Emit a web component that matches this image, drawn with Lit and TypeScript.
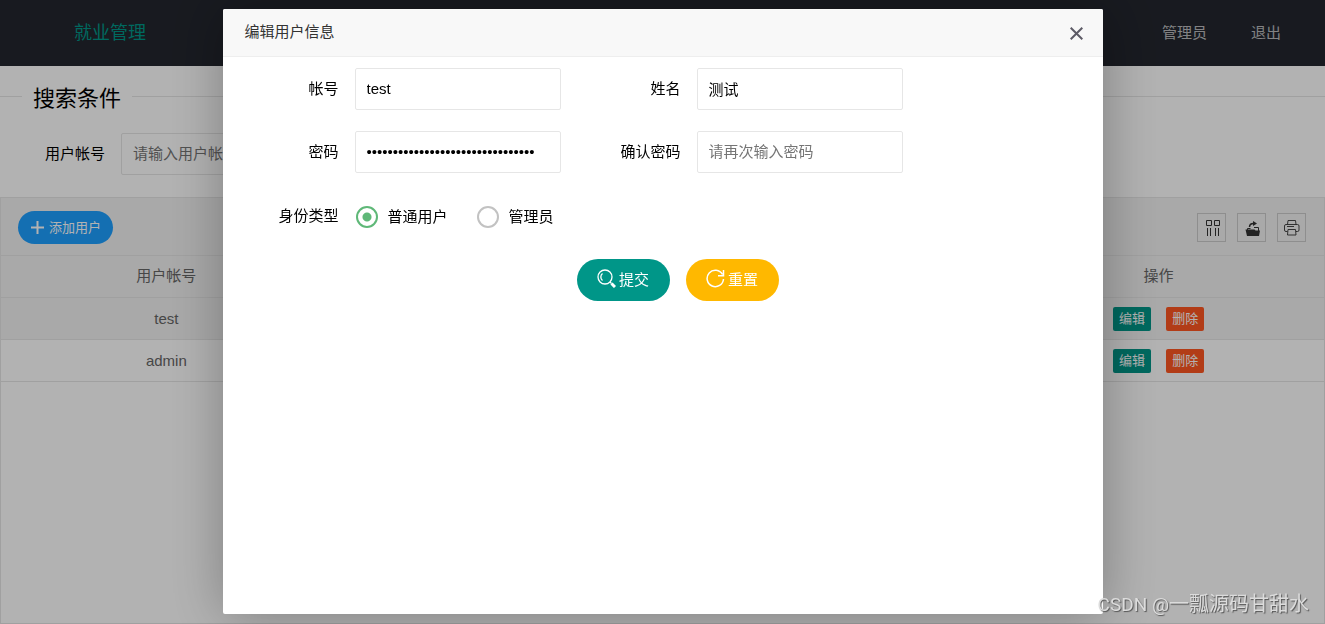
import { LitElement, html, css } from "lit";
import { customElement, state } from "lit/decorators.js";

@customElement("app-root")
export class AppRoot extends LitElement {
  @state() private role = "user";

  private users = ["test", "admin"];

  static styles = css`
    :host {
      display: flex;
      flex-direction: column;
      min-height: 100vh;
      background: #fff;
      color: #000;
      font: 15px/24px "Liberation Sans", "Noto Sans CJK SC", sans-serif;
    }
    * { box-sizing: border-box; }
    button, input { font: inherit; color: inherit; margin: 0; }
    button { border: 0; cursor: pointer; padding: 0; }
    a { color: inherit; text-decoration: none; }
    svg { display: block; flex: none; }

    .header {
      display: flex;
      align-items: center;
      justify-content: space-between;
      height: 66px;
      background: #23262e;
    }
    .logo { width: 220px; text-align: center; font-size: 18px; color: #009688; }
    .nav { display: flex; padding-right: 22px; color: rgba(255, 255, 255, 0.7); }
    .nav a { padding: 0 22px; }

    .search {
      margin: 12px 0 0;
      padding: 18px 0 22px;
      border: 0;
      border-top: 1px solid #e6e6e6;
      min-width: 0;
    }
    .search legend { margin-left: 22px; padding: 4px 11px 0; font-size: 22px; line-height: 33px; }
    .search form { display: flex; }

    .label { width: 121px; padding: 9px 16px 9px 0; text-align: right; }
    .input {
      width: 206px;
      height: 42px;
      padding: 0 11px 2px;
      border: 1px solid #e6e6e6;
      border-radius: 2px;
      background: #fff;
      outline: 0;
    }
    .input::placeholder { color: #757575; opacity: 1; }

    .table-view {
      flex: 1;
      border: 1px solid #e6e6e6;
    }
    .toolbar {
      display: flex;
      align-items: center;
      justify-content: space-between;
      height: 58px;
      padding: 2px 18px 0 17px;
      background: #f2f2f2;
      border-bottom: 1px solid #e6e6e6;
    }
    .add {
      display: flex;
      align-items: center;
      gap: 4px;
      height: 33px;
      padding: 0 12px;
      border-radius: 17px;
      background: #1e9fff;
      color: #fff;
      font-size: 13px;
    }
    .tools { display: flex; gap: 11px; }
    .tool {
      display: grid;
      place-items: center;
      width: 29px;
      height: 29px;
      border: 1px solid #ccc;
      background: none;
      color: #333;
    }
    .grid { width: 100%; table-layout: fixed; border-spacing: 0; color: #666; }
    .grid th, .grid td {
      height: 42px;
      padding: 0;
      border-bottom: 1px solid #e6e6e6;
      text-align: center;
      font-weight: 400;
    }
    .grid th { padding-bottom: 2px; }
    .grid thead tr, .grid .hover { background: #f2f2f2; }
    .actions { display: flex; justify-content: center; gap: 15px; }
    .mini {
      height: 24px;
      padding: 0 6px;
      border-radius: 2px;
      background: #009688;
      color: #fff;
      font-size: 13px;
    }
    .danger { background: #ff5722; }

    .shade {
      position: fixed;
      inset: 0;
      display: flex;
      justify-content: center;
      padding: 9px 0 10px;
      background: rgba(0, 0, 0, 0.3);
    }
    .dialog {
      width: min(880px, 100%);
      border-radius: 2px;
      background: #fff;
      box-shadow: 1px 1px 55px rgba(0, 0, 0, 0.3);
      overflow: auto;
    }
    .dialog-head {
      display: flex;
      align-items: center;
      justify-content: space-between;
      height: 48px;
      padding: 0 20px 0 22px;
      border-bottom: 1px solid #eee;
      background: #f8f8f8;
      color: #333;
    }
    .dialog-head h2 { margin: 0; padding-bottom: 2px; font-size: 15px; font-weight: 400; line-height: 24px; }
    .close { padding-top: 2px; background: none; color: #5d5b66; }
    .fields { display: grid; gap: 21px; padding: 11px; }
    .row { display: flex; gap: 15px; }
    .field { display: flex; align-items: center; }
    .radios { display: flex; align-items: center; gap: 29px; height: 44px; padding: 2px 0 0 1px; }
    .radio { display: flex; align-items: center; gap: 10px; }
    .radio input {
      appearance: none;
      width: 22px;
      height: 22px;
      border: 2px solid #c2c2c2;
      border-radius: 50%;
      background: #fff;
    }
    .radio input:checked {
      border-color: #5fb878;
      background: radial-gradient(circle, #5fb878 4px, #fff 5px);
    }
    .buttons { display: flex; justify-content: center; gap: 16px; padding-left: 30px; }
    .pill {
      display: flex;
      align-items: center;
      justify-content: center;
      gap: 3px;
      width: 93px;
      height: 42px;
      border-radius: 21px;
      background: #009688;
      color: #fff;
    }
    .pill svg { margin-bottom: 4px; }
    .warm { background: #ffb800; }

    .mark {
      position: fixed;
      right: 16px;
      bottom: 5px;
      font: 20px/28px Roboto, "Noto Sans CJK SC", sans-serif;
      color: #dcdcdc;
      text-shadow: 1px 1px 1px #555;
      pointer-events: none;
    }
    .mark span { font-size: 19px; }
  `;

  private renderPage() {
    return html`
      <header class="header">
        <div class="logo">就业管理</div>
        <nav class="nav"><a href="#user">管理员</a><a href="#logout">退出</a></nav>
      </header>
      <fieldset class="search">
        <legend>搜索条件</legend>
        <form>
          <label class="label" for="q">用户帐号</label>
          <input class="input" id="q" placeholder="请输入用户帐号" />
        </form>
      </fieldset>
      <section class="table-view">
        <div class="toolbar">
          <button class="add">
            <svg width="15" height="15" viewBox="0 0 15 15" stroke="currentColor" stroke-width="2"><path d="M7.500 1v13M1 7.500h13" /></svg>
            添加用户
          </button>
          <div class="tools">
            <button class="tool" aria-label="筛选列">
              <svg width="21" height="17" viewBox="0 0 21 17" fill="none" stroke="currentColor"><path d="M5.500 1.500h5v5h-5zM13.500 1.500h5v5h-5zM6.500 9v8M9.500 9v8M14.500 9v8M17.500 9v8" /></svg>
            </button>
            <button class="tool" aria-label="导出">
              <svg width="21" height="17" viewBox="0 0 21 17" fill="none" stroke="currentColor"><path d="M4.500 10.500h9l1 1h4.500l-1 5.500h-12z" fill="currentColor" stroke="none" /><path d="M8.500 8c0-3 1.500-3.500 4-3.500" stroke-width="1.500" /><path d="M12 2l4 2.500-4 2.500z" fill="currentColor" stroke="none" /><path d="M6.500 11V9.500h3M13 8.500h4.500V12" /></svg>
            </button>
            <button class="tool" aria-label="打印">
              <svg width="17" height="17" viewBox="0 0 17 17" fill="none" stroke="currentColor"><path d="M4.500 5.500l.5-4h7.500l.5 4M4.500 12.500H3A1.500 1.500 0 0 1 1.500 11V7A1.500 1.500 0 0 1 3 5.500h11.500A1.500 1.500 0 0 1 16 7v4a1.500 1.500 0 0 1-1.500 1.500H13M5 10.500h7.500l.5 5.500H4.500zM4 7.500h7" stroke-width=".9" /></svg>
            </button>
          </div>
        </div>
        <table class="grid">
          <thead>
            <tr><th>用户帐号</th><th></th><th></th><th>操作</th></tr>
          </thead>
          <tbody>
            ${this.users.map((name, i) => html`
              <tr class=${i === 0 ? "hover" : ""}>
                <td>${name}</td><td></td><td></td>
                <td><div class="actions"><button class="mini">编辑</button><button class="mini danger">删除</button></div></td>
              </tr>`)}
          </tbody>
        </table>
      </section>
    `;
  }

  private renderField(id: string, label: string, type: string, value: string, placeholder = "") {
    return html`<div class="field">
      <label class="label" for=${id}>${label}</label>
      <input class="input" id=${id} type=${type} .value=${value} placeholder=${placeholder} />
    </div>`;
  }

  private renderRadio(value: string, label: string) {
    return html`<label class="radio">
      <input type="radio" name="role" value=${value} .checked=${this.role === value} @change=${() => (this.role = value)} />${label}
    </label>`;
  }

  render() {
    return html`
      ${this.renderPage()}
      <div class="shade">
        <div class="dialog" role="dialog" aria-labelledby="title">
          <div class="dialog-head">
            <h2 id="title">编辑用户信息</h2>
            <button class="close" aria-label="关闭">
              <svg width="13" height="13" viewBox="0 0 13 13" stroke="currentColor" stroke-width="2"><path d="M.7.7l11.600 11.600M12.300.7L.7 12.300" /></svg>
            </button>
          </div>
          <form class="fields">
            <div class="row">
              ${this.renderField("account", "帐号", "text", "test")}
              ${this.renderField("name", "姓名", "text", "测试")}
            </div>
            <div class="row">
              ${this.renderField("pwd", "密码", "password", "0".repeat(32))}
              ${this.renderField("pwd2", "确认密码", "password", "", "请再次输入密码")}
            </div>
            <div class="field">
              <span class="label" id="role-label">身份类型</span>
              <div class="radios" role="radiogroup" aria-labelledby="role-label">
                ${this.renderRadio("user", "普通用户")} ${this.renderRadio("admin", "管理员")}
              </div>
            </div>
            <div class="buttons">
              <button class="pill" type="button">
                <svg width="19" height="19" viewBox="0 0 19 19" fill="none" stroke="currentColor" stroke-width="1.300"><circle cx="8" cy="8" r="7" /><path d="M5.500 4.500a4.500 4.500 0 0 0 0 7" /><path d="M13 13l1.500 1.500" /><path d="M14.500 14.500l3.500 3.500" stroke-width="3" /></svg>
                提交
              </button>
              <button class="pill warm" type="reset">
                <svg width="19" height="19" viewBox="0 0 19 19" fill="none" stroke="currentColor" stroke-width="1.500"><path d="M16.500 5.500A8.200 8.200 0 1 0 17.500 10M17.500 1v5.700h-5.500" /></svg>
                重置
              </button>
            </div>
          </form>
        </div>
      </div>
      <div class="mark"><span>CSDN @</span>一瓢源码甘甜水</div>
    `;
  }
}
